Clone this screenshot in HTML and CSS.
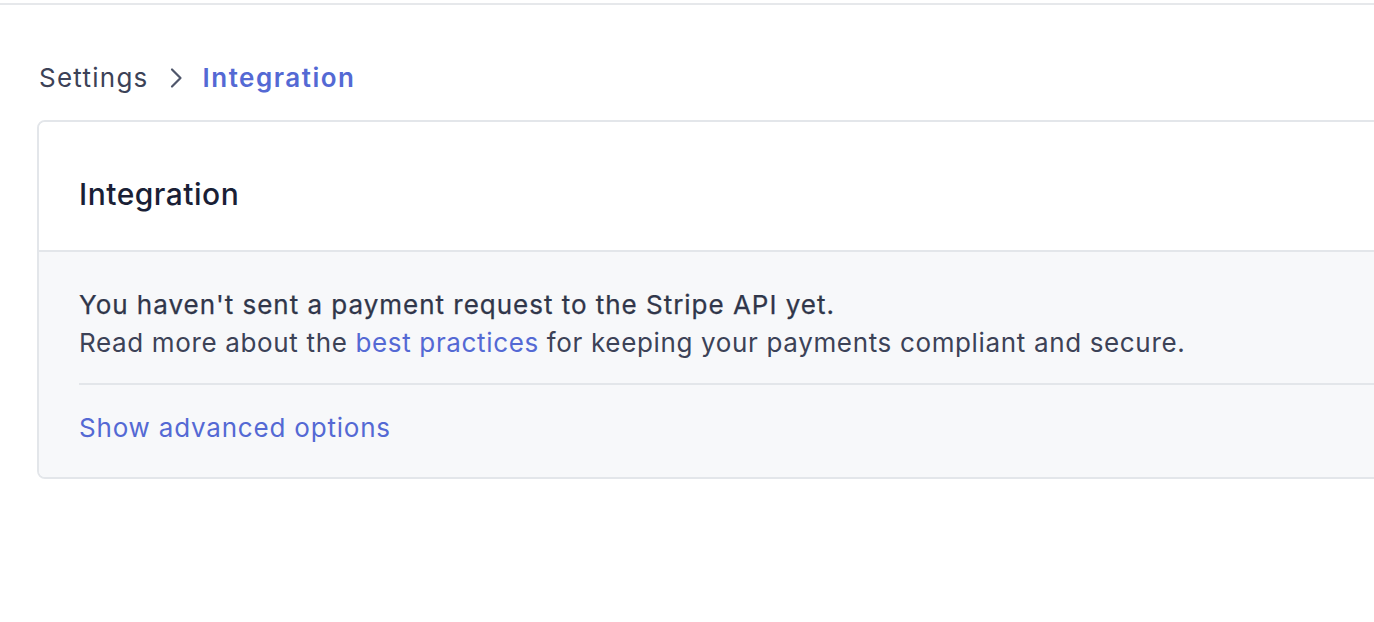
FILE: index.html
```html
<!DOCTYPE html>
<html lang="en">
<head>
    <meta charset="UTF-8">
    <meta name="viewport" content="width=device-width, initial-scale=1.0">
    <title>Integration</title>
    <link rel="stylesheet" href="styles.css">
</head>
<body>
    <div class="topbar"></div>
    <main class="page">
        <nav class="crumbs">
            <a href="#" class="crumb">Settings</a>
            <svg class="chev" width="18" height="24" viewBox="0 0 18 24" fill="none">
                <path d="M5 3.5l8.5 8.5-8.5 8.5" stroke="#4f566b" stroke-width="2.2" stroke-linecap="round" stroke-linejoin="round"/>
            </svg>
            <span class="crumb current">Integration</span>
        </nav>
        <section class="card">
            <header class="card-head">
                <h2>Integration</h2>
            </header>
            <div class="card-body">
                <p class="note">
                    <span class="lead">You haven't sent a payment request to the Stripe API yet.</span><br>
                    Read more about the <a href="#">best practices</a> for keeping your payments compliant and secure.
                </p>
                <div class="more">
                    <a href="#">Show advanced options</a>
                </div>
            </div>
        </section>
    </main>
</body>
</html>
```

FILE: styles.css
```css
body{margin:0; font-family:Inter,"Noto Sans",sans-serif; color:#3c4257; background:#fff; overflow:hidden;}
a{color:#5469d4; text-decoration:none;}
.topbar{height:3px; border-bottom:2px solid #e6e8eb;}
.page{padding:53px 0 0 37px;}
.crumbs{display:flex; align-items:center; font-size:26px; line-height:40px; letter-spacing:1.25px;}
.crumb{color:#3c4257; padding-left:2px;}
.chev{margin:0 18px 0 18px;}
.current{color:#5469d4; font-weight:600; padding-left:0; letter-spacing:1.5px;}
.card{margin-top:22px; margin-right:-40px; border:2px solid #e3e6ea; border-radius:8px; overflow:hidden;}
.card-head{background:#fff; padding:52px 40px 36px; border-bottom:2px solid #e3e6ea;}
.card-head h2{margin:0; font-size:30px; font-weight:500; line-height:40px; color:#1a1f36; letter-spacing:0.5px;}
.card-body{background:#f7f8fa; padding:34px 0 0 40px;}
.note{margin:0; font-size:26px; line-height:38px; padding-bottom:21px; border-bottom:2px solid #e3e6ea; letter-spacing:0.65px;}
.lead{color:#30364a; letter-spacing:0.98px; -webkit-text-stroke:0.25px #30364a;}
.more{font-size:26px; line-height:38px; padding:24px 0 30px; letter-spacing:0.8px;}
```
